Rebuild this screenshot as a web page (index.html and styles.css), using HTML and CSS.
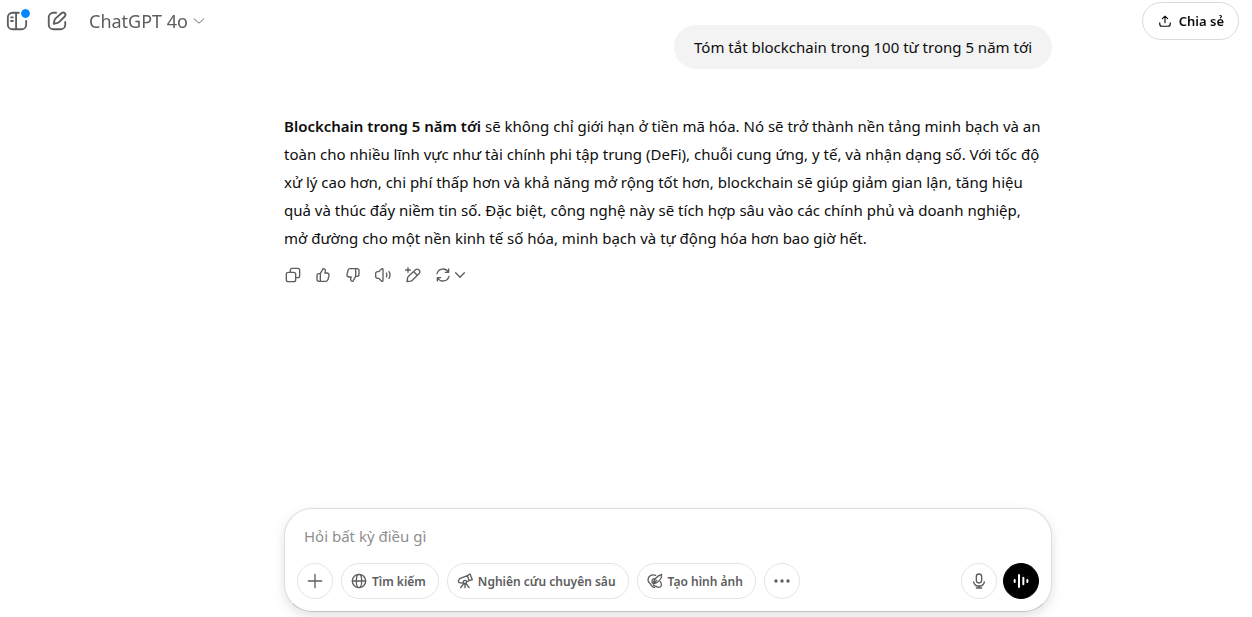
FILE: index.html
```html
<!DOCTYPE html>
<html lang="vi">
<head>
<meta charset="utf-8">
<meta name="viewport" content="width=device-width, initial-scale=1">
<title>ChatGPT</title>
<link rel="stylesheet" href="styles.css">
</head>
<body>
<div class="app">
  <header class="topbar">
    <div class="topbar-left">
      <button class="icon-button sidebar-toggle" type="button" aria-label="Mở thanh bên">
        <svg class="icon icon-lg" viewBox="0 0 24 24"><path d="M14 3H7a5 5 0 0 0-5 5v8a5 5 0 0 0 5 5h10a5 5 0 0 0 5-5v-4M11 3v18M5.500 8h2M5.500 12h2"/></svg>
        <span class="dot"></span>
      </button>
      <button class="icon-button" type="button" aria-label="Đoạn chat mới">
        <svg class="icon icon-lg" viewBox="0 0 24 24"><path d="M11 3H8a5 5 0 0 0-5 5v8a5 5 0 0 0 5 5h8a5 5 0 0 0 5-5v-3"/><path d="M17.2 3.3a2.5 2.5 0 0 1 3.5 3.5l-6.2 6.2a5 5 0 0 1-2.7 1.4L8.500 15l.6-3.300a5 5 0 0 1 1.400-2.500z"/></svg>
      </button>
      <button class="model" type="button">ChatGPT 4o
        <svg class="icon chevron" viewBox="0 0 16 16"><path d="M2.500 5.500l5.500 5 5.500-5"/></svg>
      </button>
    </div>
    <button class="share" type="button">
      <svg class="icon icon-md" viewBox="0 0 24 24"><path d="M12 15V3.500M7.500 8L12 3.500 16.500 8M3 15v2a4 4 0 0 0 4 4h10a4 4 0 0 0 4-4v-2"/></svg>
      Chia sẻ
    </button>
  </header>

  <main class="chat">
    <div class="column">
      <div class="bubble">Tóm tắt blockchain trong 100 từ trong 5 năm tới</div>
      <article class="answer">
        <p><strong>Blockchain trong 5 năm tới</strong> sẽ không chỉ giới hạn ở tiền mã hóa. Nó sẽ trở thành nền tảng minh bạch và an toàn cho nhiều lĩnh vực như tài chính phi tập trung (DeFi), chuỗi cung ứng, y tế, và nhận dạng số. Với tốc độ xử lý cao hơn, chi phí thấp hơn và khả năng mở rộng tốt hơn, blockchain sẽ giúp giảm gian lận, tăng hiệu quả và thúc đẩy niềm tin số. Đặc biệt, công nghệ này sẽ tích hợp sâu vào các chính phủ và doanh nghiệp, mở đường cho một nền kinh tế số hóa, minh bạch và tự động hóa hơn bao giờ hết.</p>
        <div class="actions">
          <button class="action" type="button" aria-label="Sao chép"><svg class="icon" viewBox="0 0 24 24"><rect x="2" y="8" width="14" height="14" rx="3"/><path d="M8 8V5a3 3 0 0 1 3-3h8a3 3 0 0 1 3 3v8a3 3 0 0 1-3 3h-3"/></svg></button>
          <button class="action" type="button" aria-label="Phản hồi tốt"><svg class="icon" viewBox="0 0 24 24"><path d="M8 10l4.200-7.600c2.400 0 3.800 1.700 3.300 4L14.800 9H18a3 3 0 0 1 3 3.700l-1.500 6A3.500 3.500 0 0 1 16 21.500H6a3 3 0 0 1-3-3V13a3 3 0 0 1 3-3zM8 10v11.500"/></svg></button>
          <button class="action" type="button" aria-label="Phản hồi không tốt"><svg class="icon" viewBox="0 0 24 24"><path d="M16 14l-4.200 7.600c-2.400 0-3.800-1.700-3.300-4L9.200 15H6a3 3 0 0 1-3-3.700l1.500-6A3.500 3.500 0 0 1 8 2.500h10a3 3 0 0 1 3 3V11a3 3 0 0 1-3 3zM16 14V2.500"/></svg></button>
          <button class="action" type="button" aria-label="Đọc to"><svg class="icon" viewBox="0 0 24 24"><path d="M12 4v16c0 1.500-1 2-2.200 1.200L5.500 17H4a3 3 0 0 1-3-3v-4a3 3 0 0 1 3-3h1.500l4.300-4.200C11 2 12 2.500 12 4zM17 9c1 2 1 4 0 6M21 7c2 3.300 2 6.700 0 10"/></svg></button>
          <button class="action" type="button" aria-label="Chỉnh sửa trong canvas"><svg class="icon" viewBox="0 0 24 24"><path d="M4.500 1v7M1 4.500h7M15 5l1.100-1.100a4 4 0 0 1 5.500 5.500L11 20a5 5 0 0 1-2.600 1.300L3 22l.8-5.400a5 5 0 0 1 1.400-2.600zM13.500 7.500l4.500 4.500"/></svg></button>
          <button class="action regenerate" type="button" aria-label="Tạo lại"><svg class="icon" viewBox="0 0 24 24"><path d="M3 10a9.300 9.300 0 0 1 17-2.500M20.500 3v5H15.500M21 14a9.300 9.300 0 0 1-17 2.500M3.500 21v-5H8.500"/></svg><svg class="icon chevron chevron-dark" viewBox="0 0 16 16"><path d="M3 5.500l5 5 5-5"/></svg></button>
        </div>
      </article>

      <form class="composer">
        <input class="prompt" type="text" aria-label="Hỏi bất kỳ điều gì" placeholder="Hỏi bất kỳ điều gì">
        <div class="tools">
          <button class="pill round" type="button" aria-label="Thêm"><svg class="icon" viewBox="0 0 24 24"><path d="M12 2v20M2 12h20"/></svg></button>
          <button class="pill" type="button"><svg class="icon" viewBox="0 0 24 24"><circle cx="12" cy="12" r="10"/><ellipse cx="12" cy="12" rx="4" ry="10"/><path d="M2 12h20"/></svg>Tìm kiếm</button>
          <button class="pill" type="button"><svg class="icon" viewBox="0 0 24 24"><path d="M15.500 4l4-2.500 3.500 8.500-4.500 1.500zM15.500 4L4 8.500 2 12l1 2.500 5 .5 1.500-1M14.500 13l4-1.500M12 16v6M10.500 15.500L5.500 22M13.500 15.500l4.500 6.500"/><circle cx="12" cy="13.500" r="2.500"/></svg>Nghiên cứu chuyên sâu</button>
          <button class="pill" type="button"><svg class="icon" viewBox="0 0 24 24"><path d="M13 3.500C7 1.500 1.500 4.500 1.500 10c0 5 3.500 5 5 8.500 1 2 2.500 3 5 3M11 8.500a4 4 0 0 0-1.500 7.500M20 13c3 3.500 2 8.500-2 8.500-3.500 0-4.500-2-8-3M9.500 16.500c0-5.500 5.500-12.500 12.500-14.500.5 7-5.500 13.500-12.500 14.500zl5-5.500"/></svg>Tạo hình ảnh</button>
          <button class="pill round" type="button" aria-label="Thêm công cụ"><svg class="icon solid" viewBox="0 0 24 24"><circle cx="3" cy="12" r="2.500"/><circle cx="12" cy="12" r="2.500"/><circle cx="21" cy="12" r="2.500"/></svg></button>
          <span class="spacer"></span>
          <button class="pill round" type="button" aria-label="Đọc chính tả"><svg class="icon" viewBox="0 0 24 24"><rect x="8" y="1.500" width="8" height="13.500" rx="4"/><path d="M4 13.500a8.200 8.200 0 0 0 16 0M12 19v3.500M8 22.500h8"/></svg></button>
          <button class="pill round voice" type="button" aria-label="Chế độ thoại"><svg class="icon" viewBox="0 0 24 24"><path d="M2.500 10.500v3M9 3v18M15.500 7v10M21.500 10.500v3"/></svg></button>
        </div>
      </form>
    </div>
  </main>
</div>
</body>
</html>
```

FILE: styles.css
```css
* { box-sizing: border-box; }

body {
  margin: 0;
  background: #fff;
  color: #0d0d0d;
  font-family: "Segoe UI", "Noto Sans", sans-serif;
  font-size: 15px;
}

button, input {
  font: inherit;
  color: inherit;
  background: none;
  border: 0;
  padding: 0;
}

button { cursor: pointer; }

.icon {
  display: block;
  flex: none;
  width: 16px;
  height: 16px;
  fill: none;
  stroke: currentColor;
  stroke-width: 2;
  stroke-linecap: round;
  stroke-linejoin: round;
}

.icon-lg { width: 22px; height: 22px; }
.icon-md { width: 14px; height: 14px; }
.chevron { width: 14px; height: 14px; stroke-width: 1; }
.chevron-dark { stroke-width: 1.5; }
.solid { fill: currentColor; stroke: none; }

.topbar {
  position: fixed;
  inset: 0 0 auto 0;
  display: flex;
  justify-content: space-between;
  align-items: flex-start;
  padding: 2px 13px 0 6px;
}

.topbar-left {
  display: flex;
  align-items: center;
  gap: 18px;
  height: 38px;
  color: #5d5d5d;
}

.icon-button { position: relative; }

.dot {
  position: absolute;
  top: -1px;
  right: -2px;
  width: 9px;
  height: 9px;
  border-radius: 50%;
  background: #0285ff;
  outline: 1px solid #fff;
}

.model {
  display: flex;
  align-items: center;
  gap: 4px;
  margin-left: 3px;
  font-size: 18px;
}

.share {
  display: flex;
  align-items: center;
  gap: 7px;
  height: 38px;
  padding: 0 14px 0 15px;
  border: 1px solid #d9d9d9;
  border-radius: 19px;
  background: #fff;
  font-size: 13px;
  font-weight: 600;
}

.chat {
  display: flex;
  justify-content: center;
  min-height: 100vh;
  padding: 25px 0 5px 84px;
}

.column {
  display: flex;
  flex-direction: column;
  width: 100%;
  max-width: 768px;
}

.bubble {
  align-self: flex-end;
  padding: 10px 20px;
  border-radius: 22px;
  background: #f3f3f3;
  line-height: 24px;
}

.answer {
  flex: 1;
  padding-top: 43px;
}

.answer p {
  margin: 0;
  padding-right: 6px;
  line-height: 28px;
}

.answer strong { font-weight: 600; }

.actions {
  display: flex;
  gap: 14px;
  padding: 15px 1px;
  color: #5d5d5d;
}

.regenerate {
  display: flex;
  align-items: center;
  gap: 2px;
}

.composer {
  display: flex;
  flex-direction: column;
  gap: 14px;
  padding: 15px 12px 12px;
  border: 1px solid #dedede;
  border-bottom-color: #c4c4c4;
  border-radius: 28px;
  background: #fff;
  box-shadow: 0 4px 12px rgba(0, 0, 0, 0.12);
}

.prompt {
  width: 100%;
  height: 25px;
  padding: 0 7px 2px;
  outline: 0;
}

.prompt::placeholder { color: #8f8f8f; opacity: 1; }

.tools {
  display: flex;
  align-items: center;
  gap: 8px;
  color: #5d5d5d;
}

.pill {
  display: flex;
  align-items: center;
  justify-content: center;
  gap: 5px;
  height: 36px;
  padding: 0 12px 0 9px;
  border: 1px solid #e3e3e3;
  border-radius: 18px;
  font-size: 12px;
  font-weight: 600;
  white-space: nowrap;
}

.round {
  width: 36px;
  padding: 0;
}

.spacer { flex: 1; }

.voice {
  margin-left: -2px;
  border-color: #000;
  background: #000;
  color: #fff;
}

.voice .icon { stroke-width: 3; }
```
